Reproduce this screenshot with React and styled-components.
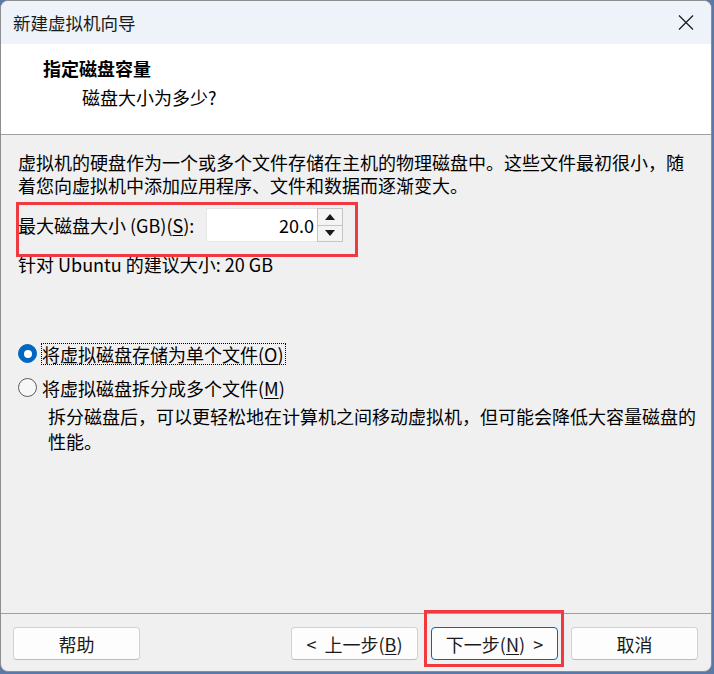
import styled, { createGlobalStyle } from "styled-components";

const GlobalStyle = createGlobalStyle`
  html, body {
    margin: 0;
    padding: 0;
    background: #5a78a8;
    overflow: hidden;
  }
  * {
    box-sizing: border-box;
  }
`;

const FONT = `"Noto Sans CJK SC", "Noto Sans", sans-serif`;

const Window = styled.div`
  width: 712px;
  height: 672px;
  display: flex;
  flex-direction: column;
  background: #f0f0f0;
  border: 1px solid #8e8e8e;
  border-radius: 8px;
  overflow: hidden;
  font-family: ${FONT};
  color: #000;
`;

const TitleBar = styled.div`
  height: 43px;
  flex: none;
  display: flex;
  align-items: center;
  justify-content: space-between;
  padding-left: 12px;
  background: #eef2f9;
  font-size: 17.5px;
  color: #1a1a1a;
`;

const CloseButton = styled.div`
  width: 46px;
  height: 43px;
  display: flex;
  align-items: center;
  justify-content: center;
  margin-right: 2px;
`;

const Header = styled.div`
  height: 91px;
  flex: none;
  background: #fff;
  border-bottom: 1px solid #a0a0a0;
  padding-top: 12px;
`;

const HeaderTitle = styled.div`
  font-size: 18px;
  font-weight: 700;
  line-height: 24px;
  padding-left: 42px;
`;

const HeaderSub = styled.div`
  font-size: 18px;
  line-height: 24px;
  margin-top: 5px;
  padding-left: 81px;
`;

const Body = styled.div`
  flex: 1;
  padding: 16px 14px 0 17px;
  font-size: 18px;
`;

const Para = styled.p`
  margin: 0;
  line-height: 23px;
  margin-top: ${(p) => p.$top || 0}px;
`;

const U = styled.span`
  text-decoration: underline;
  text-underline-offset: 2px;
`;

const SizeRow = styled.div`
  position: relative;
  display: flex;
  align-items: center;
  margin-top: 11px;
  height: 34px;
`;

const Annotation = styled.div`
  position: absolute;
  border: 3px solid #ee3a40;
  pointer-events: none;
  top: ${(p) => p.$top}px;
  left: ${(p) => p.$left}px;
  width: ${(p) => p.$width}px;
  height: ${(p) => p.$height}px;
`;

const Label = styled.span`
  width: 188px;
  line-height: 23px;
`;

const SpinBox = styled.div`
  display: flex;
  height: 34px;
`;

const SpinInput = styled.div`
  width: 111px;
  height: 34px;
  background: #fff;
  border: 1px solid #e6e6e6;
  border-right: none;
  text-align: right;
  padding-right: 3px;
  line-height: 32px;
  font-size: 18px;
`;

const SpinButtons = styled.div`
  width: 26px;
  display: flex;
  flex-direction: column;
  border: 1px solid #c4c4c4;
  background: #f4f4f4;
`;

const SpinButton = styled.div`
  flex: 1;
  display: flex;
  align-items: center;
  justify-content: center;
  & + & {
    border-top: 1px solid #c4c4c4;
  }
`;

const RadioRow = styled.label`
  display: flex;
  align-items: center;
  height: 23px;
  margin-top: ${(p) => p.$top}px;
`;

const RadioCircle = styled.span`
  width: 19px;
  height: 19px;
  border-radius: 50%;
  flex: none;
  display: flex;
  align-items: center;
  justify-content: center;
  background: ${(p) => (p.$checked ? "#0067c0" : "#f7f7f7")};
  border: 1px solid ${(p) => (p.$checked ? "#0067c0" : "#5c5c5c")};
  &::after {
    content: "";
    display: ${(p) => (p.$checked ? "block" : "none")};
    width: 8px;
    height: 8px;
    border-radius: 50%;
    background: #fff;
  }
`;

const RadioText = styled.span`
  margin-left: 4px;
  padding: 0 1px 0 0;
  line-height: 20px;
  border: 1px dotted ${(p) => (p.$focused ? "#000" : "transparent")};
`;

const Desc = styled.p`
  margin: 5px 0 0 30px;
  line-height: 24.5px;
`;

const Footer = styled.div`
  flex: none;
  height: 58px;
  border-top: 1px solid #a0a0a0;
  display: flex;
  align-items: flex-start;
  padding: 13px 13px 0 12px;
  gap: 13px;
`;

const Spacer = styled.div`
  flex: 1;
`;

const Button = styled.div`
  position: relative;
  width: 127px;
  height: 33px;
  display: flex;
  align-items: center;
  justify-content: center;
  background: #fdfdfd;
  border: 1px solid ${(p) => (p.$primary ? "#0067c0" : "#d2d2d2")};
  border-bottom-color: ${(p) => (p.$primary ? "#0067c0" : "#bcbcbc")};
  border-radius: 4px;
  font-size: 18px;
  color: #1a1a1a;
  white-space: pre;
`;

const Arrow = ({ up }) => (
  <svg width="10" height="6" viewBox="0 0 10 6">
    <path d={up ? "M0 6 L5 0 L10 6 Z" : "M0 0 L5 6 L10 0 Z"} fill="#1a1a1a" />
  </svg>
);

export default function App() {
  return (
    <>
      <GlobalStyle />
      <Window>
        <TitleBar>
          <span>新建虚拟机向导</span>
          <CloseButton>
            <svg width="16" height="15" viewBox="0 0 16 15">
              <path d="M1 0.5 L15 14.5 M15 0.5 L1 14.5" stroke="#1a1a1a" strokeWidth="1.2" />
            </svg>
          </CloseButton>
        </TitleBar>
        <Header>
          <HeaderTitle>指定磁盘容量</HeaderTitle>
          <HeaderSub>磁盘大小为多少?</HeaderSub>
        </Header>
        <Body>
          <Para>
            虚拟机的硬盘作为一个或多个文件存储在主机的物理磁盘中。这些文件最初很小，随着您向虚拟机中添加应用程序、文件和数据而逐渐变大。
          </Para>
          <SizeRow>
            <Annotation $top={-6} $left={-2} $width={342} $height={55} />
            <Label>
              最大磁盘大小 (GB)(<U>S</U>):
            </Label>
            <SpinBox>
              <SpinInput>20.0</SpinInput>
              <SpinButtons>
                <SpinButton>
                  <Arrow up />
                </SpinButton>
                <SpinButton>
                  <Arrow />
                </SpinButton>
              </SpinButtons>
            </SpinBox>
          </SizeRow>
          <Para $top={11}>针对 Ubuntu 的建议大小: 20 GB</Para>
          <RadioRow $top={66}>
            <RadioCircle $checked />
            <RadioText $focused>
              将虚拟磁盘存储为单个文件(<U>O</U>)
            </RadioText>
          </RadioRow>
          <RadioRow $top={11}>
            <RadioCircle />
            <RadioText>
              将虚拟磁盘拆分成多个文件(<U>M</U>)
            </RadioText>
          </RadioRow>
          <Desc>
            拆分磁盘后，可以更轻松地在计算机之间移动虚拟机，但可能会降低大容量磁盘的性能。
          </Desc>
        </Body>
        <Footer>
          <Button>帮助</Button>
          <Spacer />
          <Button>
            {"<  上一步("}
            <U>B</U>)
          </Button>
          <Button $primary>
            <Annotation $top={-18} $left={-8} $width={140} $height={57} />
            下一步(<U>N</U>){"  >"}
          </Button>
          <Button>取消</Button>
        </Footer>
      </Window>
    </>
  );
}
